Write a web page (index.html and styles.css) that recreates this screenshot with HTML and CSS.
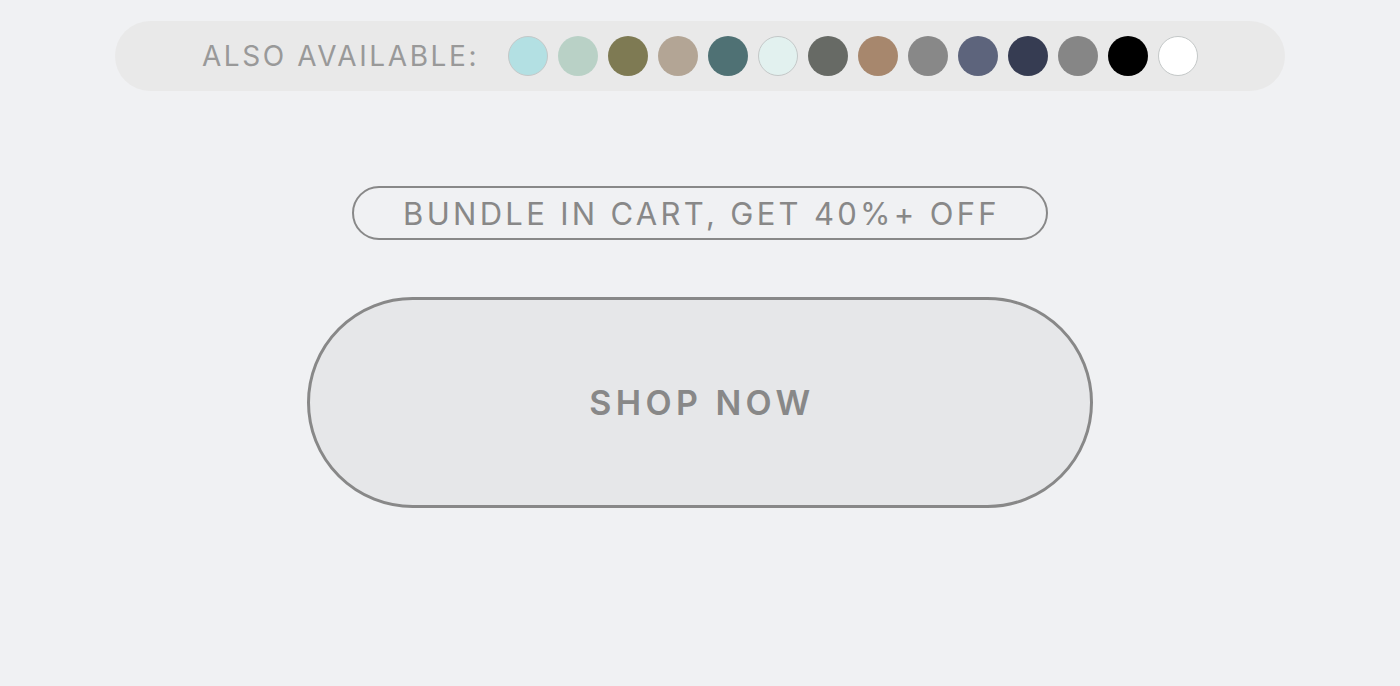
FILE: index.html
```html
<!DOCTYPE html>
<html lang="en">

<head>
    <meta charset="UTF-8">
    <meta name="viewport" content="width=device-width, initial-scale=1.0">
    <title>Shop</title>
    <link rel="stylesheet" href="styles.css">
</head>

<body>
    <div class="colors">
        <span class="colors-label">Also available:</span>
        <div class="swatches">
            <span class="swatch light" style="background-color: #b3e0e3"></span>
            <span class="swatch" style="background-color: #b9d1c6"></span>
            <span class="swatch" style="background-color: #7e7a53"></span>
            <span class="swatch" style="background-color: #b3a595"></span>
            <span class="swatch" style="background-color: #4f7174"></span>
            <span class="swatch light" style="background-color: #e2f1ef"></span>
            <span class="swatch" style="background-color: #676a65"></span>
            <span class="swatch" style="background-color: #a7876d"></span>
            <span class="swatch" style="background-color: #888888"></span>
            <span class="swatch" style="background-color: #5d647c"></span>
            <span class="swatch" style="background-color: #363c52"></span>
            <span class="swatch" style="background-color: #868686"></span>
            <span class="swatch" style="background-color: #000000"></span>
            <span class="swatch light" style="background-color: #ffffff"></span>
        </div>
    </div>

    <div class="promo">
        <span class="bundle">Bundle in cart, get 40%+ off</span>
        <a href="#" class="shop">Shop now</a>
    </div>
</body>

</html>
```

FILE: styles.css
```css
body {
    margin: 0;
    background-color: #f0f1f3;
    font-family: "Inter", "Liberation Sans", sans-serif;
    color: #888;
}

.colors {
    width: 1170px;
    height: 70px;
    margin: 21px auto 0;
    border-radius: 35px;
    background-color: #e9e9e9;
    display: flex;
    align-items: center;
    justify-content: center;
    gap: 29px;
}

.colors-label {
    font-size: 28px;
    letter-spacing: 2.6px;
    text-transform: uppercase;
    color: #999;
}

.swatches {
    display: flex;
    gap: 10px;
}

.swatch {
    width: 40px;
    height: 40px;
    border-radius: 50%;
    box-sizing: border-box;
}

.swatch.light {
    border: 1px solid #c4c8c8;
}

.promo {
    display: flex;
    flex-direction: column;
    align-items: center;
    margin-top: 95px;
}

.bundle {
    width: 696px;
    height: 54px;
    box-sizing: border-box;
    border: 2px solid #888;
    border-radius: 27px;
    display: flex;
    align-items: center;
    justify-content: center;
    padding-left: 3px;
    font-size: 31px;
    letter-spacing: 3.3px;
    text-transform: uppercase;
}

.shop {
    margin-top: 57px;
    width: 786px;
    height: 211px;
    box-sizing: border-box;
    border: 3px solid #888;
    border-radius: 106px;
    background-color: #e6e7e9;
    display: flex;
    align-items: center;
    justify-content: center;
    padding-left: 4px;
    font-size: 34px;
    font-weight: 600;
    letter-spacing: 4.4px;
    text-transform: uppercase;
    text-decoration: none;
    color: #888;
}
```
